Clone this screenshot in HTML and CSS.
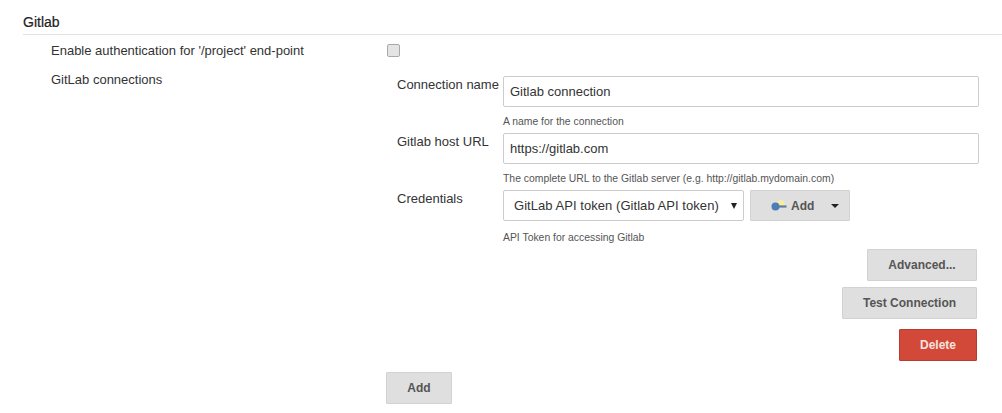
FILE: index.html
```html
<!DOCTYPE html>
<html lang="en">
<head>
<meta charset="utf-8">
<title>Gitlab</title>
<link rel="stylesheet" href="styles.css">
</head>
<body>
<section class="section">
  <h2 class="section-title">Gitlab</h2>
  <div class="row row-auth">
    <div class="row-label">Enable authentication for '/project' end-point</div>
    <div class="row-value"><input class="check" type="checkbox"></div>
  </div>
  <div class="row row-conn">
    <div class="row-label">GitLab connections</div>
    <div class="row-value">
      <div class="conn">
        <div class="field">
          <label class="field-label">Connection name</label>
          <div class="field-body">
            <input class="text" type="text" value="Gitlab connection">
            <div class="help">A name for the connection</div>
          </div>
        </div>
        <div class="field">
          <label class="field-label">Gitlab host URL</label>
          <div class="field-body">
            <input class="text" type="text" value="https://gitlab.com">
            <div class="help">The complete URL to the Gitlab server (e.g. http://gitlab.mydomain.com)</div>
          </div>
        </div>
        <div class="field">
          <label class="field-label">Credentials</label>
          <div class="field-body">
            <div class="cred">
              <div class="select"><span>GitLab API token (Gitlab API token)</span><span class="select-arrow"></span></div>
              <button class="btn btn-cred" type="button">
                <svg class="key" width="18" height="12" viewBox="0 0 18 12" aria-hidden="true">
                  <circle cx="10" cy="3.5" r="3.5" fill="#f7eda0"/>
                  <circle cx="4.5" cy="6.5" r="4" fill="#4a7fb5"/>
                  <rect x="7.5" y="5.4" width="8" height="2.2" fill="#5d7f9c"/>
                </svg>
                <span>Add</span>
                <span class="caret"></span>
              </button>
            </div>
            <div class="help help-cred">API Token for accessing Gitlab</div>
          </div>
        </div>
        <div class="actions">
          <button class="btn btn-adv" type="button">Advanced...</button>
          <button class="btn btn-test" type="button">Test Connection</button>
          <button class="btn btn-danger" type="button">Delete</button>
        </div>
      </div>
      <button class="btn btn-add" type="button">Add</button>
    </div>
  </div>
</section>
</body>
</html>
```
FILE: styles.css
```css
* { box-sizing: border-box; }
html, body { margin: 0; padding: 0; background: #fff; }
body {
  width: 1002px;
  height: 413px;
  overflow: hidden;
  font-family: "Liberation Sans", Arial, sans-serif;
  font-size: 13px;
  color: #333;
}
.section { padding: 14px 0 0 23px; }
.section-title {
  margin: 0;
  height: 21px;
  font-size: 14px;
  line-height: 17px;
  font-weight: 400;
  color: #222;
  border-bottom: 1px solid #e1e1e1;
  -webkit-text-stroke: 0.2px #222;
}
.row { display: grid; grid-template-columns: 340px 1fr; padding-left: 28px; }
.row-auth { padding-top: 8px; height: 36px; }
.row-label { line-height: 16px; color: #333; }
.row-auth .row-value { padding-top: 1px; }
.check {
  display: block;
  width: 13px;
  height: 13px;
  margin: 0 0 0 -4px;
  appearance: none;
  background: #e4e4e4;
  border: 1px solid #a9a9a9;
  border-radius: 2px;
}
.row-conn { padding-top: 1px; }
.row-conn .row-value { margin-left: -5px; }
.conn { width: 593px; padding-top: 4px; padding-left: 11px; }
.field { display: grid; grid-template-columns: 106px 476px; }
.field-label { padding-top: 1px; line-height: 16px; }
.field-label, .text, .select { white-space: nowrap; }
.text {
  display: block;
  width: 100%;
  height: 31px;
  padding: 0 6px;
  font: 13px "Liberation Sans", Arial, sans-serif;
  color: #333;
  background: #fff;
  border: 1px solid #ccc;
  border-radius: 2px;
}
.help {
  height: 26px;
  padding-top: 9px;
  font-size: 10.4px;
  line-height: 11px;
  color: #555;
}
.cred { display: flex; gap: 6px; }
.select {
  display: flex;
  align-items: center;
  justify-content: space-between;
  width: 241px;
  height: 31px;
  padding: 0 6px 0 10px;
  font-size: 13px;
  letter-spacing: 0.05px;
  color: #333;
  background: #fff;
  border: 1px solid #ccc;
  border-radius: 2px;
}
.select-arrow {
  width: 0;
  height: 0;
  border: 3.5px solid transparent;
  border-top: 6px solid #222;
  border-bottom: 0;
}
.btn {
  height: 32px;
  padding: 0;
  font: 700 12px "Liberation Sans", Arial, sans-serif;
  color: #555;
  background: #dfdfdf;
  border: 1px solid #d2d2d2;
  border-radius: 1px;
}
.btn-cred {
  display: flex;
  align-items: center;
  width: 100px;
  height: 31px;
  padding-left: 20px;
}
.key { margin-right: 2px; }
.caret {
  margin-left: 17px;
  width: 0;
  height: 0;
  border: 4px solid transparent;
  border-top: 4px solid #222;
  border-bottom: 0;
}
.help-cred { height: 28px; padding-top: 11px; }
.actions {
  display: flex;
  flex-direction: column;
  align-items: flex-end;
  width: 580px;
}
.btn-adv { width: 110px; }
.btn-test { width: 135px; margin-top: 6px; }
.btn-danger {
  width: 78px;
  margin-top: 10px;
  color: #fbe3de;
  background: #d24939;
  border-color: #b83c2e;
}
.btn-add { display: block; width: 66px; margin-top: 11px; }
```
